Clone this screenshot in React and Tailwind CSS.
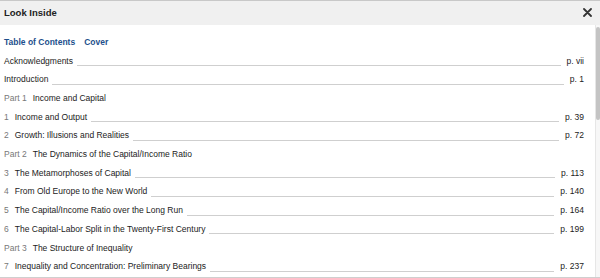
import React from 'react'

const entries = [
  { title: 'Acknowledgments', page: 'p. vii' },
  { title: 'Introduction', page: 'p. 1' },
  { part: 'Part 1', title: 'Income and Capital' },
  { num: '1', title: 'Income and Output', page: 'p. 39' },
  { num: '2', title: 'Growth: Illusions and Realities', page: 'p. 72' },
  { part: 'Part 2', title: 'The Dynamics of the Capital/Income Ratio' },
  { num: '3', title: 'The Metamorphoses of Capital', page: 'p. 113' },
  { num: '4', title: 'From Old Europe to the New World', page: 'p. 140' },
  { num: '5', title: 'The Capital/Income Ratio over the Long Run', page: 'p. 164' },
  { num: '6', title: 'The Capital-Labor Split in the Twenty-First Century', page: 'p. 199' },
  { part: 'Part 3', title: 'The Structure of Inequality' },
  { num: '7', title: 'Inequality and Concentration: Preliminary Bearings', page: 'p. 237' },
]

const Row = ({ item }) => {
  if (item.part) {
    return (
      <div className="flex items-center h-[18.7px] whitespace-nowrap">
        <span className="text-[#777] mr-[6px]">{item.part}</span>
        <span className="text-[#222]">{item.title}</span>
      </div>
    )
  }
  return (
    <div className="flex items-center h-[18.7px] whitespace-nowrap">
      {item.num && <span className="text-[#777] mr-[6px]">{item.num}</span>}
      <span className="text-[#222]">{item.title}</span>
      <div className="flex-1 h-px bg-[#cfcfcf] mt-[9px] ml-[4px] mr-[6px]" />
      <span className="text-[#222]">{item.page}</span>
    </div>
  )
}

export default function App() {
  return (
    <div className="w-[600px] h-[278px] bg-white overflow-hidden flex flex-col" style={{ fontFamily: '"Liberation Sans", Arial, sans-serif' }}>
      {/* Header */}
      <div className="h-[25px] flex-shrink-0 bg-[#f0f0f0] border-t border-[#c8c8c8] flex items-center justify-between pl-[4px] pr-[8px]">
        <h2 className="text-[9.5px] font-bold text-[#222]">Look Inside</h2>
        <svg width="9" height="9" viewBox="0 0 9 9" className="mt-[-1px]">
          <path d="M1 1 L8 8 M8 1 L1 8" stroke="#333" strokeWidth="1.8" strokeLinecap="round" />
        </svg>
      </div>

      {/* Body */}
      <div className="flex flex-1 min-h-0 border-b border-[#cfcfcf]">
        <div className="flex-1 pt-[8px] pl-[4px] pr-[11px] text-[8.5px]">
          <div className="flex items-center h-[18.7px] gap-[9px] font-bold text-[#1d4f8c]">
            <span>Table of Contents</span>
            <span>Cover</span>
          </div>
          {entries.map((item, i) => (
            <Row key={i} item={item} />
          ))}
        </div>
        {/* Scrollbar */}
        <div className="w-[5px] bg-[#f7f7f7] border-l border-[#e6e6e6] pt-[2px]">
          <div className="h-[93px] w-[4px] bg-[#c4c4c4] rounded-sm" />
        </div>
      </div>
    </div>
  )
}
